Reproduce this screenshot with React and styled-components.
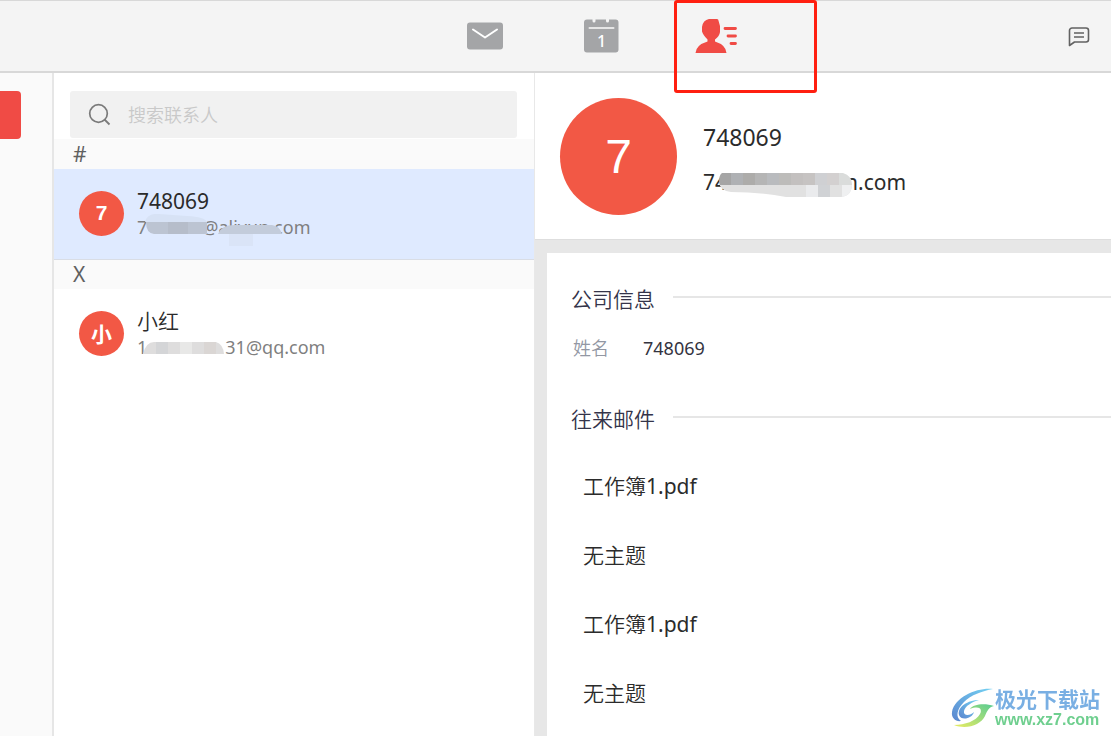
import React, { useState } from 'react';
import styled, { createGlobalStyle } from 'styled-components';

const GlobalStyle = createGlobalStyle`
  * {
    box-sizing: border-box;
  }

  body {
    margin: 0;
    background-color: #ffffff;
    color: #2b2b2b;
    font-family: 'Noto Sans', 'Noto Sans CJK SC DemiLight', 'Noto Sans CJK SC', sans-serif;
  }

  button,
  input {
    font-family: inherit;
  }

  h1,
  h2,
  p,
  ul,
  dl,
  dd {
    margin: 0;
    padding: 0;
  }
`;

const Page = styled.div`
  display: flex;
  flex-direction: column;
  min-height: 100vh;
`;

const TopBar = styled.header`
  display: flex;
  justify-content: space-between;
  height: 73px;
  padding: 0 21px 0 427px;
  background-color: #f4f4f4;
  border-top: 1px solid #d8d8d8;
  border-bottom: 2px solid #d8d8d8;
`;

const Nav = styled.nav`
  display: flex;
`;

const NavButton = styled.button`
  display: flex;
  position: relative;
  justify-content: center;
  align-items: center;
  width: 116px;
  padding: 0;
  border: none;
  background: none;
  color: ${props => (props.$active ? '#f04b45' : '#a4a5a7')};
  cursor: pointer;
`;

const Highlight = styled.span`
  position: absolute;
  z-index: 2;
  top: -1px;
  left: 15px;
  width: 143px;
  height: 93px;
  border: 3px solid #ff1f10;
  border-radius: 3px;
  pointer-events: none;
`;

const ChatButton = styled.button`
  display: flex;
  align-items: center;
  padding: 2px 0 0;
  border: none;
  background: none;
  color: #626262;
  cursor: pointer;
`;

const Body = styled.div`
  display: flex;
  flex: 1;
`;

const Rail = styled.aside`
  flex: none;
  width: 54px;
  padding-top: 18px;
  background-color: #fafafa;
  border-right: 2px solid #e6e6e6;
`;

const RailButton = styled.button`
  display: block;
  width: 21px;
  height: 48px;
  padding: 0;
  border: none;
  border-radius: 0 4px 4px 0;
  background-color: #f04b45;
`;

const ContactPane = styled.section`
  flex: none;
  width: 481px;
  border-right: 1px solid #e8e8e8;
`;

const SearchBox = styled.label`
  display: flex;
  align-items: center;
  gap: 16px;
  height: 47px;
  margin: 18px 17px 1px 16px;
  padding: 0 18px;
  border-radius: 3px;
  background-color: #f1f1f1;
  color: #7a7a7a;
`;

const SearchInput = styled.input`
  flex: 1;
  min-width: 0;
  padding: 0;
  border: none;
  outline: none;
  background: none;
  color: #2b2b2b;
  font-size: 18px;

  &::placeholder {
    color: #c9c9c9;
    opacity: 1;
  }
`;

const GroupTitle = styled.h2`
  height: 30px;
  padding-left: 19px;
  border-top: 1px solid ${props => (props.$divided ? '#d9dde5' : '#fafafa')};
  background-color: #fafafa;
  color: #606060;
  font-size: 21px;
  font-weight: 400;
  line-height: 29px;
`;

const ContactRow = styled.button`
  display: flex;
  align-items: center;
  gap: 13px;
  width: 100%;
  height: 90px;
  padding: 0 25px 2px;
  border: none;
  background-color: ${props => (props.$selected ? '#dfeaff' : '#ffffff')};
  color: #2b2b2b;
  text-align: left;
  cursor: pointer;
`;

const Avatar = styled.span`
  display: flex;
  flex: none;
  justify-content: center;
  align-items: center;
  width: ${props => (props.$large ? '117px' : '45px')};
  height: ${props => (props.$large ? '117px' : '45px')};
  border-radius: 50%;
  background-color: #f25845;
  color: #ffffff;
  font-family: 'Liberation Sans', 'Noto Sans CJK SC', sans-serif;
  font-size: ${props => (props.$large ? '48px' : '21px')};
  font-weight: ${props => (props.$large ? 400 : 700)};
`;

const ContactText = styled.span`
  display: flex;
  flex-direction: column;
  padding-top: 1px;
`;

const ContactName = styled.span`
  font-size: 21px;
  line-height: 26px;
`;

const Email = styled.span`
  display: flex;
  position: relative;
  color: ${props => (props.$large ? '#2b2b2b' : '#7f7f7f')};
  font-size: ${props => (props.$large ? '21px' : '18px')};
  line-height: 26px;
`;

const Hidden = styled.span`
  width: ${props => props.$width}px;
`;

const Mosaic = styled.svg`
  position: absolute;
  top: 0;
  left: 0;
`;

const Detail = styled.main`
  display: flex;
  flex: 1;
  flex-direction: column;
  min-width: 0;
  background-color: #e7e7e7;
`;

const DetailHead = styled.div`
  display: flex;
  align-items: center;
  gap: 26px;
  height: 167px;
  padding-left: 25px;
  border-bottom: 1px solid #dedede;
  background-color: #ffffff;
`;

const DetailText = styled.div`
  display: flex;
  flex-direction: column;
  gap: 18px;
  padding-top: 6px;
`;

const DetailName = styled.h1`
  font-size: 23px;
  font-weight: 400;
  line-height: 28px;
`;

const Card = styled.div`
  flex: 1;
  margin: 13px 0 0 12px;
  padding: 31px 0 8px 24px;
  background-color: #ffffff;
`;

const SectionTitle = styled.h2`
  display: flex;
  align-items: center;
  gap: 18px;
  color: #34344a;
  font-size: 21px;
  font-weight: 400;
  line-height: 30px;

  &::after {
    content: '';
    flex: 1;
    height: 2px;
    margin-bottom: 4px;
    background-color: #e6e6e6;
  }
`;

const InfoRow = styled.dl`
  display: flex;
  gap: 34px;
  margin: 20px 0 42px 2px;
  font-size: 18px;
  line-height: 28px;
`;

const InfoLabel = styled.dt`
  color: #9297a3;
`;

const InfoValue = styled.dd`
  color: #34343f;
`;

const MailList = styled.ul`
  display: flex;
  flex-direction: column;
  gap: 39px;
  margin-top: 37px;
  padding-left: 12px;
  list-style: none;
`;

const MailLink = styled.a`
  display: block;
  color: #2b2b2b;
  font-size: 21px;
  line-height: 30px;
  text-decoration: none;
`;

const Watermark = styled.div`
  display: flex;
  position: fixed;
  right: 11px;
  bottom: 7px;
  align-items: flex-end;
`;

const WatermarkText = styled.div`
  display: flex;
  flex-direction: column;
`;

const WatermarkName = styled.span`
  color: #79afe3;
  font-family: 'Noto Sans CJK SC', sans-serif;
  font-size: 21px;
  font-weight: 700;
  line-height: 26px;
`;

const WatermarkUrl = styled.span`
  color: #6fcf8f;
  font-family: 'Liberation Sans', sans-serif;
  font-size: 16px;
  font-weight: 700;
  line-height: 18px;
`;

const MailIcon = () => (
  <svg width="36" height="28" viewBox="0 0 36 28">
    <rect width="36" height="27" y="0.5" rx="3" fill="currentColor" />
    <path
      d="M6 7.5 18 15.5 30 7.5"
      fill="none"
      stroke="#fff"
      strokeWidth="2"
      strokeLinecap="round"
      strokeLinejoin="round"
    />
  </svg>
);

const CalendarIcon = () => (
  <svg width="36" height="36" viewBox="0 0 36 36">
    <path
      d="M4 1.5H9.5V3A1.5 1.5 0 0 0 12.5 3V1.5H23V3A1.5 1.5 0 0 0 26 3V1.5H32.5A3 3 0 0 1 35.5 4.500V31.500A3 3 0 0 1 32.5 34.500H4A3 3 0 0 1 1 31.500V4.500A3 3 0 0 1 4 1.500Z"
      fill="currentColor"
    />
    <path d="M6.500 10H30.500" stroke="#e6e6e6" strokeWidth="2" strokeLinecap="round" />
    <text x="18.500" y="29" textAnchor="middle" fill="#fff" fontSize="16" fontWeight="500">
      1
    </text>
  </svg>
);

const ContactsIcon = () => (
  <svg width="44" height="34" viewBox="0 0 44 34">
    <path
      d="M12 0H22Q23.5 0 23.6 2L25 7V13Q24.5 17 20 20.5V22.5Q31 26 31.5 34H0.500Q1 26 12.500 22.500V20.500Q8 16 7 12.500V8Q8 1 14 0Z"
      fill="currentColor"
    />
    <path
      d="M30 9.500H40.500M33 17H40.500M36 24.500H40.500"
      stroke="currentColor"
      strokeWidth="2.800"
      strokeLinecap="round"
    />
  </svg>
);

const ChatIcon = () => (
  <svg width="22" height="20" viewBox="0 0 22 20" fill="none" stroke="currentColor">
    <path
      d="M4 1H18A2.500 2.500 0 0 1 20.500 3.500V12.500A2.500 2.500 0 0 1 18 15H6.500L1.500 18.500V3.500A2.500 2.500 0 0 1 4 1Z"
      strokeWidth="1.600"
      strokeLinejoin="round"
    />
    <path d="M6 6H16M6 10H16" strokeWidth="1.400" />
  </svg>
);

const SearchIcon = () => (
  <svg width="24" height="24" viewBox="0 0 24 24" fill="none" stroke="currentColor">
    <circle cx="10.500" cy="10.500" r="8.800" strokeWidth="1.700" />
    <path d="M16.500 16.500 21.500 21.500" strokeWidth="1.800" />
  </svg>
);

const WatermarkLogo = () => (
  <svg width="44" height="42" viewBox="0 0 44 42">
    <defs>
      <linearGradient id="wave" x1="0" y1="1" x2="1" y2="0">
        <stop offset="0" stopColor="#5b86cf" />
        <stop offset="1" stopColor="#74d2f3" />
      </linearGradient>
      <linearGradient id="leaf" x1="0" y1="1" x2="1" y2="0">
        <stop offset="0" stopColor="#e9ec62" />
        <stop offset="1" stopColor="#58cc93" />
      </linearGradient>
    </defs>
    <path
      d="M42 2C28 0 4 9 1 25C0 31 5 35 10 34C4 30 6 22 13 15C20 8 31 4 42 2Z"
      fill="url(#wave)"
    />
    <path
      d="M28 13C17 13 6 20 8 28C10 34 21 32 23 25C19 29 12 29 13 24C14 19 21 15 28 13Z"
      fill="url(#wave)"
    />
    <path
      d="M43 19C34 16 22 17 19 22C27 19 32 21 29 27C25 34 14 38 3 38C15 43 30 38 34 29C36 24 38 20 43 19Z"
      fill="url(#leaf)"
    />
  </svg>
);

const SelectedMosaic = () => (
  <Mosaic width="180" height="36" viewBox="0 0 180 36">
    <path d="M8 8Q10 -1 22 0L50 2Q68 3 70 8Z" fill="#d7e2f5" />
    <path d="M9 8H70V20H17Q9 19 9 8Z" fill="#bcc4d2" />
    <path d="M31 8H51V20H31Z" fill="#b6bdca" />
    <path d="M81 20Q84 11 98 11H135Q143 12 145 20Z" fill="#c3ccdb" />
    <path d="M92 20H116V32H92Z" fill="#dae4f7" />
  </Mosaic>
);

const ListMosaic = () => (
  <Mosaic width="180" height="30" viewBox="0 0 180 30">
    <path d="M6 20Q9 8 17 8H79Q86 10 87 20Z" fill="#dedddd" />
    <path d="M19 8H31V20H19Z" fill="#d4d5d7" />
    <path d="M43 8H55V20H43Z" fill="#e8e8e7" />
    <path d="M67 8H79V20H67Z" fill="#dad6d4" />
  </Mosaic>
);

const detailTop = [
  '#a5a5a5',
  '#afb1b4',
  '#adacaa',
  '#b5b5b5',
  '#b9bbbe',
  '#bdbcba',
  '#c3c0bf',
  '#c6c3c2',
  '#cfd0d3',
  '#d3d0d0',
  '#dadcdb',
];

const DetailMosaic = () => (
  <Mosaic width="160" height="34" viewBox="0 0 160 34">
    <clipPath id="smudge">
      <path d="M19 4H140Q149 7 149 15Q149 27 138 28H83Q58 23 28 23Q17 22 16 13Q16 6 19 4Z" />
    </clipPath>
    <g clipPath="url(#smudge)">
      <path d="M16 15H149V29H16Z" fill="#e1e1e1" />
      <path d="M103 15H115V29H103Z" fill="#eaebed" />
      <path d="M115 15H127V29H115Z" fill="#d0d2d5" />
      <path d="M139 15H150V29H139Z" fill="#eff0f1" />
      {detailTop.map((fill, i) => (
        <rect key={i} x={i * 12 + 16} y="4" width="13" height="12" fill={fill} />
      ))}
    </g>
  </Mosaic>
);

const mails = ['工作簿1.pdf', '无主题', '工作簿1.pdf', '无主题'];

function App() {
  const [query, setQuery] = useState('');

  return (
    <Page>
      <GlobalStyle />
      <TopBar>
        <Nav>
          <NavButton aria-label="邮件">
            <MailIcon />
          </NavButton>
          <NavButton aria-label="日历">
            <CalendarIcon />
          </NavButton>
          <NavButton aria-label="联系人" $active>
            <ContactsIcon />
            <Highlight />
          </NavButton>
        </Nav>
        <ChatButton aria-label="消息">
          <ChatIcon />
        </ChatButton>
      </TopBar>
      <Body>
        <Rail>
          <RailButton aria-label="新建" />
        </Rail>
        <ContactPane>
          <SearchBox>
            <SearchIcon />
            <SearchInput
              aria-label="搜索联系人"
              placeholder="搜索联系人"
              value={query}
              onChange={e => setQuery(e.target.value)}
            />
          </SearchBox>
          <GroupTitle>#</GroupTitle>
          <ContactRow $selected>
            <Avatar>7</Avatar>
            <ContactText>
              <ContactName>748069</ContactName>
              <Email>
                7<Hidden $width={55} />
                @aliyun.com
                <SelectedMosaic />
              </Email>
            </ContactText>
          </ContactRow>
          <GroupTitle $divided>X</GroupTitle>
          <ContactRow>
            <Avatar>小</Avatar>
            <ContactText>
              <ContactName>小红</ContactName>
              <Email>
                1<Hidden $width={78} />
                31@qq.com
                <ListMosaic />
              </Email>
            </ContactText>
          </ContactRow>
        </ContactPane>
        <Detail>
          <DetailHead>
            <Avatar $large>7</Avatar>
            <DetailText>
              <DetailName>748069</DetailName>
              <Email $large>
                74
                <Hidden $width={118} />
                n.com
                <DetailMosaic />
              </Email>
            </DetailText>
          </DetailHead>
          <Card>
            <SectionTitle>公司信息</SectionTitle>
            <InfoRow>
              <InfoLabel>姓名</InfoLabel>
              <InfoValue>748069</InfoValue>
            </InfoRow>
            <SectionTitle>往来邮件</SectionTitle>
            <MailList>
              {mails.map((mail, i) => (
                <li key={i}>
                  <MailLink href="#mail">{mail}</MailLink>
                </li>
              ))}
            </MailList>
          </Card>
        </Detail>
      </Body>
      <Watermark>
        <WatermarkLogo />
        <WatermarkText>
          <WatermarkName>极光下载站</WatermarkName>
          <WatermarkUrl>www.xz7.com</WatermarkUrl>
        </WatermarkText>
      </Watermark>
    </Page>
  );
}

export default App;
